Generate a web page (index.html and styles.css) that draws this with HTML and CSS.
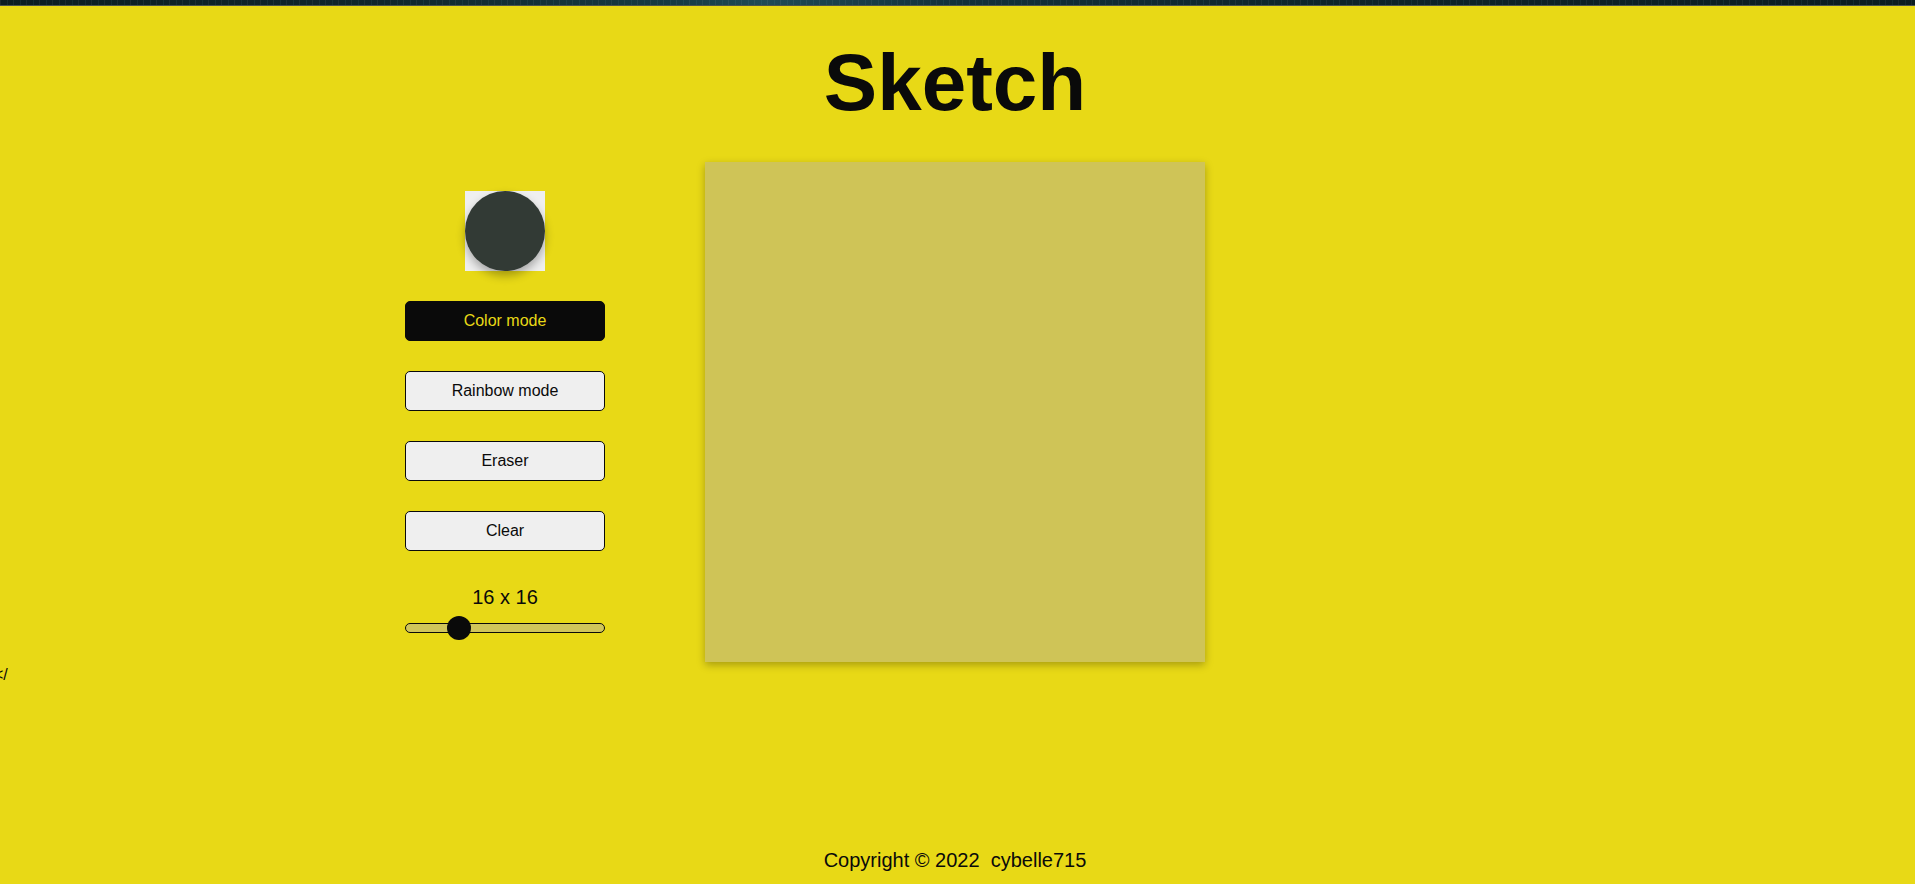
FILE: index.html
```html
<!DOCTYPE html>
<html lang="en">
<head>
<meta charset="utf-8">
<title>Sketch</title>
<link rel="stylesheet" href="styles.css">
</head>
<body>
<div class="topstrip"></div>
<h1 class="title">Sketch</h1>
<main class="main">
  <section class="sidebar">
    <div class="picker"><div class="swatch"></div></div>
    <button class="btn btn-active">Color mode</button>
    <button class="btn">Rainbow mode</button>
    <button class="btn">Eraser</button>
    <button class="btn">Clear</button>
    <div class="size-label">16 x 16</div>
    <input class="slider" type="range" min="1" max="64" value="16">
  </section>
  <div class="canvas"></div>
  <div class="spacer"></div>
</main>
<div class="stray">&lt;/</div>
<footer class="footer">Copyright © 2022&nbsp; cybelle715</footer>
</body>
</html>
```
FILE: styles.css
```css
html, body {
  margin: 0;
  padding: 0;
}
body {
  background: #e8d916;
  font-family: "Liberation Sans", Arial, sans-serif;
  color: #0a0a0a;
  min-height: 100vh;
  display: flex;
  flex-direction: column;
  padding-right: 5px;
}
.topstrip {
  height: 5px;
  margin-right: -5px;
  border-bottom: 1px solid #4a5350;
  background:
    repeating-linear-gradient(90deg, rgba(255,255,255,0.06) 0 1px, transparent 1px 7px, rgba(120,200,210,0.08) 7px 8px, transparent 8px 13px),
    linear-gradient(90deg, #0b1d21 0%, #10262b 20%, #163a42 35%, #1f4a55 40%, #12303a 50%, #0e2429 70%, #0b1c20 100%);
}
.title {
  margin: 31px 0 0;
  font-size: 80px;
  line-height: 92px;
  font-weight: 700;
  text-align: center;
}
.main {
  display: flex;
  justify-content: center;
  gap: 100px;
  margin-top: 33px;
}
.sidebar {
  width: 200px;
  display: flex;
  flex-direction: column;
  align-items: center;
  padding-top: 29px;
}
.picker {
  width: 80px;
  height: 80px;
  background: #efefef;
  margin-bottom: 30px;
}
.swatch {
  width: 80px;
  height: 80px;
  border-radius: 50%;
  background: #323a35;
  box-shadow: 0 5px 10px rgba(0,0,0,0.3);
}
.btn {
  width: 200px;
  height: 40px;
  margin: 0 0 30px;
  border: 1px solid #0a0a0a;
  border-radius: 5px;
  background: #efefef;
  color: #0a0a0a;
  font-family: "Liberation Sans", Arial, sans-serif;
  font-size: 16px;
  padding: 0;
}
.btn-active {
  background: #0a0a0a;
  color: #e8d916;
}
.btn:last-of-type {
  margin-bottom: 35px;
}
.size-label {
  font-size: 20px;
  line-height: 23px;
  margin-bottom: 7px;
}
.slider {
  -webkit-appearance: none;
  appearance: none;
  width: 200px;
  height: 24px;
  margin: 0;
  background: transparent;
}
.slider::-webkit-slider-runnable-track {
  height: 10px;
  box-sizing: border-box;
  border: 1px solid #0a0a0a;
  border-radius: 5px;
  background: #d0c55a;
}
.slider::-webkit-slider-thumb {
  -webkit-appearance: none;
  appearance: none;
  width: 24px;
  height: 24px;
  border-radius: 50%;
  background: #0a0a0a;
  margin-top: -8px;
  border: none;
}
.canvas {
  width: 500px;
  height: 500px;
  background: #cfc457;
  box-shadow: 0 3px 8px rgba(0,0,0,0.28);
}
.spacer {
  width: 200px;
}
.stray {
  font-size: 16px;
  line-height: 18px;
  margin-top: 4px;
  margin-left: -6px;
}
.footer {
  margin-top: auto;
  text-align: center;
  font-size: 20px;
  line-height: 23px;
  padding-bottom: 12px;
}
```
